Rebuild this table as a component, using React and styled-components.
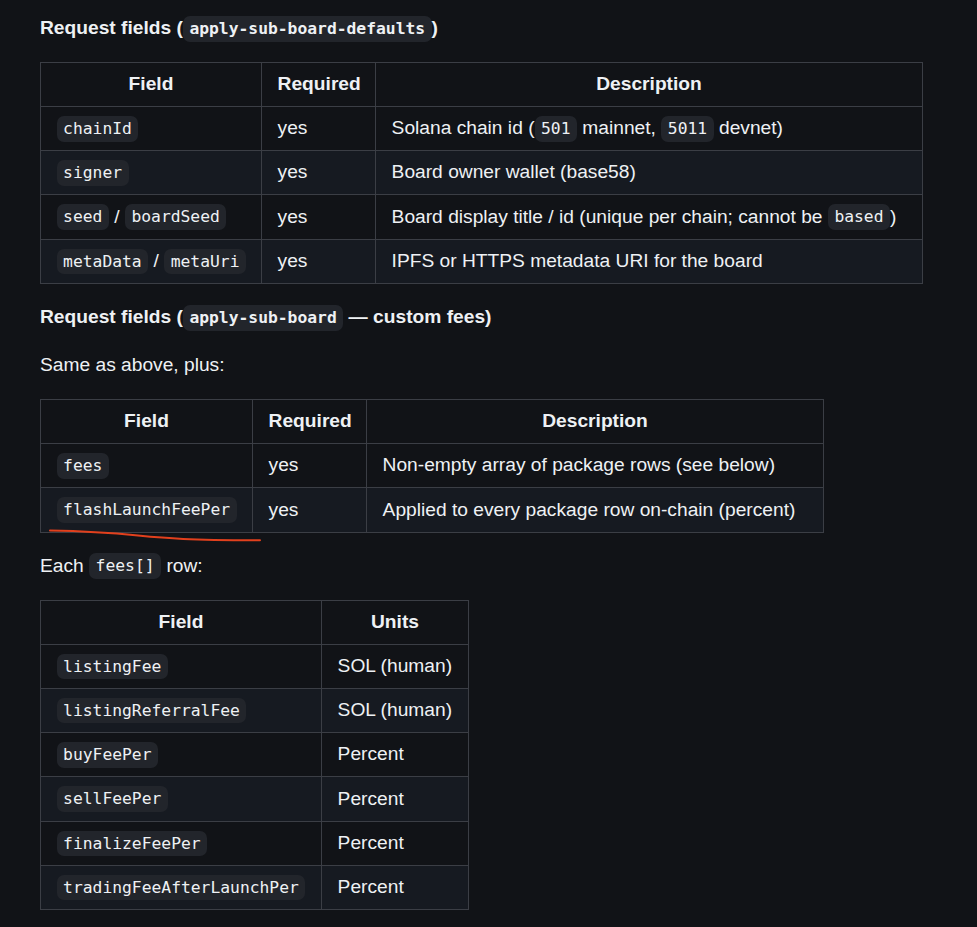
import React from "react";
import styled, { createGlobalStyle } from "styled-components";

const GlobalStyle = createGlobalStyle`
  html, body {
    margin: 0;
    padding: 0;
    background: #111317;
  }
  body {
    color: #eef1f4;
    font-family: "Liberation Sans", Arial, sans-serif;
    font-size: 19.2px;
    -webkit-font-smoothing: antialiased;
  }
`;

const Page = styled.main`
  min-height: 927px;
  box-sizing: border-box;
  padding: 16.3px 40px 20px;
  background: #111317;
`;

const Heading = styled.h4`
  margin: 21.7px 0 21.6px;
  font-size: 19.2px;
  font-weight: 700;
  line-height: 24px;
  &:first-child {
    margin-top: 0;
  }
`;

const Para = styled.p`
  margin: 0 0 19.2px;
  line-height: 28.8px;
`;

const Code = styled.code`
  font-family: "DejaVu Sans Mono", "Liberation Mono", monospace;
  font-size: 85%;
  line-height: 1;
  padding: 0.2em 0.4em;
  border-radius: 7px;
  background: #22252b;
  color: #eef1f4;
  font-weight: inherit;
  white-space: nowrap;
`;

const TableWrap = styled.div`
  position: relative;
`;

const Table = styled.table`
  border-collapse: collapse;
  border-spacing: 0;
  table-layout: fixed;
  width: ${(p) => p.$width}px;
  margin: 0 0 19.2px;
`;

const Col = styled.col`
  width: ${(p) => p.$w}px;
`;

const Row = styled.tr`
  background: ${(p) => (p.$striped ? "#161a21" : "#111317")};
`;

const HeadCell = styled.th`
  border: 1px solid #3b3e45;
  padding: 7.2px 15.6px;
  line-height: 28.8px;
  font-weight: 700;
  text-align: center;
`;

const Cell = styled.td`
  border: 1px solid #3b3e45;
  padding: 7.2px 15.6px;
  line-height: 28.8px;
  text-align: left;
  white-space: nowrap;
`;

const Scribble = styled.svg`
  position: absolute;
  left: 8px;
  top: 126px;
  width: 216px;
  height: 18px;
  overflow: visible;
  pointer-events: none;
`;

function DocTable({ widths, headers, rows, children }) {
  const total = widths.reduce((a, b) => a + b, 0);
  return (
    <TableWrap>
      <Table $width={total}>
        <colgroup>
          {widths.map((w, i) => (
            <Col key={i} $w={w} />
          ))}
        </colgroup>
        <thead>
          <Row>
            {headers.map((h) => (
              <HeadCell key={h}>{h}</HeadCell>
            ))}
          </Row>
        </thead>
        <tbody>
          {rows.map((r, i) => (
            <Row key={i} $striped={i % 2 === 1}>
              {r.map((c, j) => (
                <Cell key={j}>{c}</Cell>
              ))}
            </Row>
          ))}
        </tbody>
      </Table>
      {children}
    </TableWrap>
  );
}

const defaultsRows = [
  [<Code>chainId</Code>, "yes", <>Solana chain id (<Code>501</Code> mainnet, <Code>5011</Code> devnet)</>],
  [<Code>signer</Code>, "yes", "Board owner wallet (base58)"],
  [
    <><Code>seed</Code> / <Code>boardSeed</Code></>,
    "yes",
    <>Board display title / id (unique per chain; cannot be <Code>based</Code>)</>,
  ],
  [<><Code>metaData</Code> / <Code>metaUri</Code></>, "yes", "IPFS or HTTPS metadata URI for the board"],
];

const customRows = [
  [<Code>fees</Code>, "yes", "Non-empty array of package rows (see below)"],
  [<Code>flashLaunchFeePer</Code>, "yes", "Applied to every package row on-chain (percent)"],
];

const feeRows = [
  [<Code>listingFee</Code>, "SOL (human)"],
  [<Code>listingReferralFee</Code>, "SOL (human)"],
  [<Code>buyFeePer</Code>, "Percent"],
  [<Code>sellFeePer</Code>, "Percent"],
  [<Code>finalizeFeePer</Code>, "Percent"],
  [<Code>tradingFeeAfterLaunchPer</Code>, "Percent"],
];

export default function App() {
  return (
    <>
      <GlobalStyle />
      <Page>
        <Heading>
          Request fields (<Code>apply-sub-board-defaults</Code>)
        </Heading>
        <DocTable
          widths={[221, 114, 547]}
          headers={["Field", "Required", "Description"]}
          rows={defaultsRows}
        />
        <Heading>
          Request fields (<Code>apply-sub-board</Code> — custom fees)
        </Heading>
        <Para>Same as above, plus:</Para>
        <DocTable
          widths={[212, 114, 457]}
          headers={["Field", "Required", "Description"]}
          rows={customRows}
        >
          <Scribble viewBox="0 0 216 18">
            <path
              d="M2 5.5 C 30 6, 60 7.5, 90 10.5 S 140 15, 212 15.2"
              fill="none"
              stroke="#e2401d"
              strokeWidth="2"
              strokeLinecap="round"
            />
          </Scribble>
        </DocTable>
        <Para>
          Each <Code>fees[]</Code> row:
        </Para>
        <DocTable widths={[281, 147]} headers={["Field", "Units"]} rows={feeRows} />
      </Page>
    </>
  );
}
